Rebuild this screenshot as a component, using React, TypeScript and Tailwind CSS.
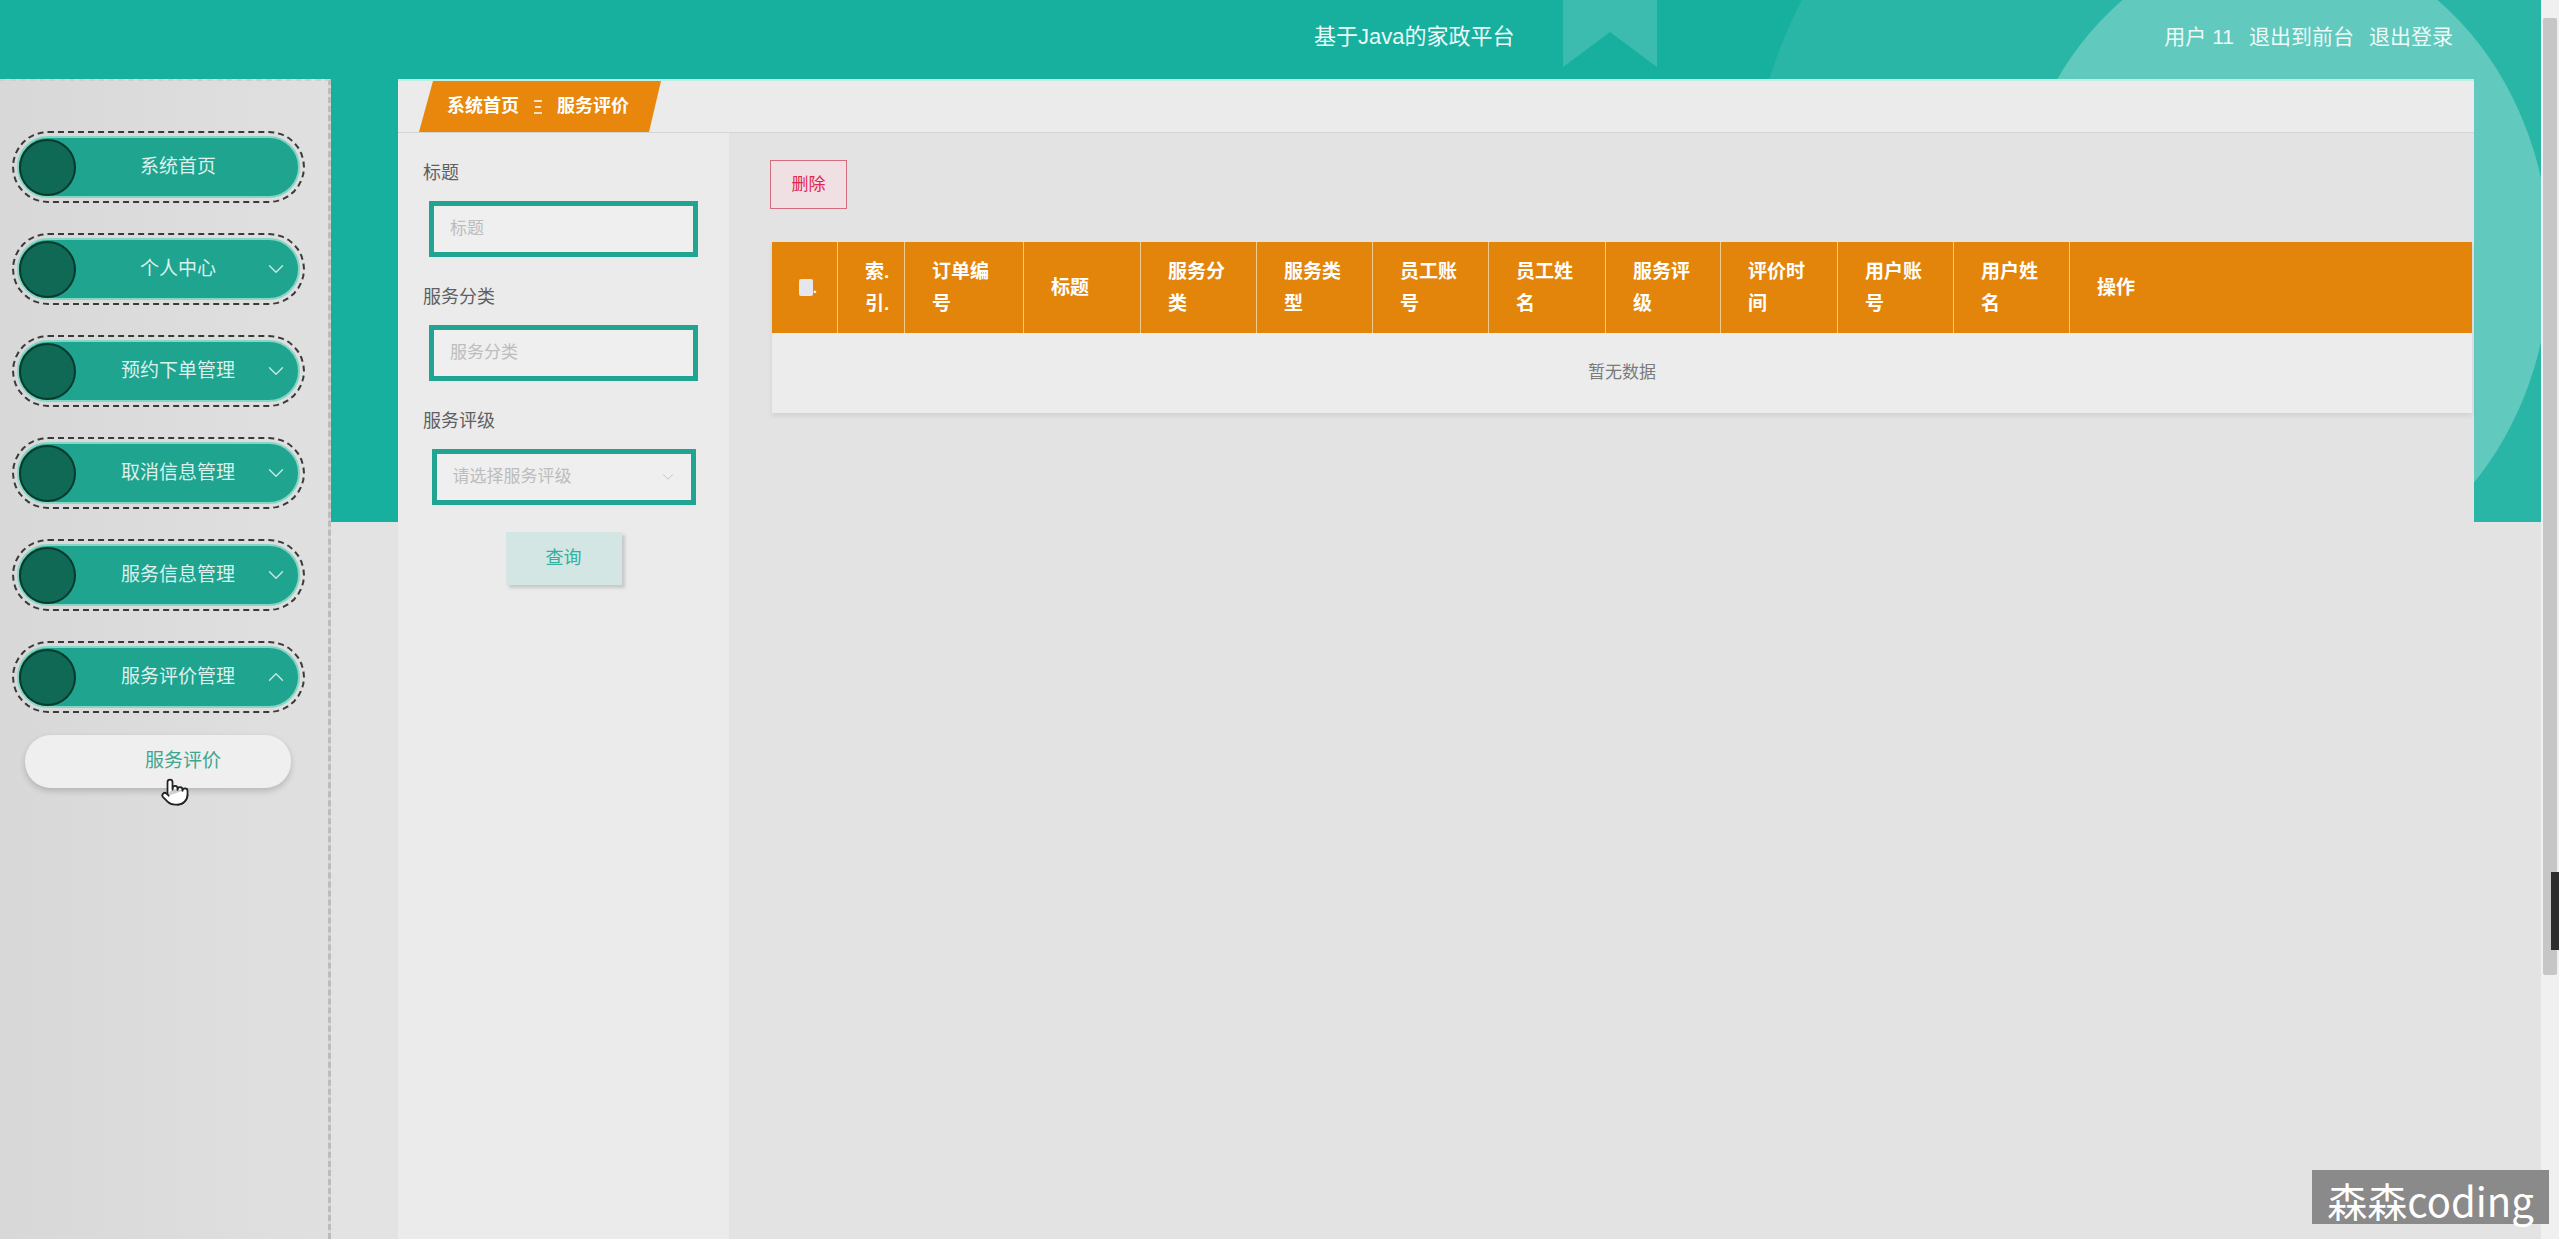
import { ChevronDown, ChevronUp, Pointer } from "lucide-react";

const menus = [
  { label: "系统首页", arrow: "" },
  { label: "个人中心", arrow: "down" },
  { label: "预约下单管理", arrow: "down" },
  { label: "取消信息管理", arrow: "down" },
  { label: "服务信息管理", arrow: "down" },
  { label: "服务评价管理", arrow: "up" },
];

const columns = [
  { w: "w-[67px]", a: "索.", b: "引." },
  { w: "w-[119px]", a: "订单编", b: "号" },
  { w: "w-[117px]", a: "标题", b: "" },
  { w: "w-[116px]", a: "服务分", b: "类" },
  { w: "w-[116px]", a: "服务类", b: "型" },
  { w: "w-[116px]", a: "员工账", b: "号" },
  { w: "w-[117px]", a: "员工姓", b: "名" },
  { w: "w-[115px]", a: "服务评", b: "级" },
  { w: "w-[117px]", a: "评价时", b: "间" },
  { w: "w-[116px]", a: "用户账", b: "号" },
  { w: "w-[116px]", a: "用户姓", b: "名" },
];

function MenuPill({ label, arrow }: { label: string; arrow: string }) {
  return (
    <div className="ml-[17px] flex h-[62px] w-[283px] items-center rounded-full border-2 border-[#86d6c6] bg-[#1fa48f] outline-2 outline-dashed outline-offset-[3px] outline-[#3a3a3a]">
      <div className="h-[57px] w-[57px] shrink-0 rounded-full border-2 border-[#083a2e] bg-[#0f6954]" />
      <span className="flex-1 pl-[26px] text-center text-[19px] text-[#dcf1ec]">{label}</span>
      <div className="flex w-[44px] justify-center text-[#c4ebe2]">
        {arrow === "down" && <ChevronDown size={26} strokeWidth={1.3} />}
        {arrow === "up" && <ChevronUp size={26} strokeWidth={1.3} />}
      </div>
    </div>
  );
}

function Field({ label, placeholder }: { label: string; placeholder: string }) {
  return (
    <>
      <div className="mt-[28px] h-[24px] pl-[25px] text-[18px] leading-[24px] text-[#5f5f5f]">{label}</div>
      <div className="mx-auto mt-[16px] flex h-[56px] w-[269px] items-center border-[5px] border-[#1fa591] bg-[#efefef] pl-[16px] text-[17px] text-[#bdbdbd]">
        {placeholder}
      </div>
    </>
  );
}

export default function App() {
  return (
    <div className="relative flex h-[1239px] w-full overflow-hidden bg-[#e3e3e3] font-['Liberation_Sans','Noto_Sans_CJK_SC',sans-serif]">
      {/* header decorations */}
      <svg className="pointer-events-none absolute left-0 top-0" width="2541" height="523">
        <ellipse cx="2280" cy="260" rx="540" ry="560" fill="#ffffff" fillOpacity="0.08" />
        <ellipse cx="2280" cy="260" rx="270" ry="320" fill="#ffffff" fillOpacity="0.27" />
        <polygon points="1563,0 1657,0 1657,67 1610,32 1563,67" fill="#ffffff" fillOpacity="0.16" />
      </svg>

      <div className="flex flex-1 flex-col">
        {/* Header */}
        <div className="h-[79px] shrink-0 bg-[#17b09f]">
          <div className="relative flex h-full items-center pb-[6px] pl-[1314px] pr-[88px] text-[#ecfaf7]">
            <span className="text-[22px]">基于Java的家政平台</span>
            <div className="ml-auto flex gap-[15px] text-[21px]">
              <span>用户 11</span>
              <span>退出到前台</span>
              <span>退出登录</span>
            </div>
          </div>
        </div>

        <div className="flex flex-1">
          {/* Sidebar */}
          <div className="relative flex w-[331px] shrink-0 flex-col gap-[40px] border-r-[3px] border-t-2 border-dashed border-r-[#bcbcbc] border-t-[#cfcfcf] bg-[linear-gradient(to_right,#d8d8d8,#e0e0e0)] pt-[55px]">
            {menus.map((m) => (
              <MenuPill key={m.label} label={m.label} arrow={m.arrow} />
            ))}
            <div className="-mt-[13px] ml-[25px] flex h-[53px] w-[266px] items-center justify-center rounded-[26px] bg-[#efefef] pl-[50px] text-[19px] text-[#3ea690] shadow-[0_3px_6px_rgba(0,0,0,0.18)]">
              服务评价
            </div>
            <Pointer className="absolute left-[160px] top-[696px]" size={30} fill="#ffffff" strokeWidth={1.4} color="#222" />
          </div>

          {/* Right region */}
          <div className="flex flex-1 bg-[linear-gradient(to_bottom,#17b09f_443px,#e3e3e3_443px)] px-[67px]">
            <div className="relative flex flex-1 flex-col">
              {/* Breadcrumb */}
              <div className="flex h-[54px] shrink-0 border-b border-t-2 border-b-[#d4d4d4] border-t-[#bfeee5] bg-[#ebebeb]">
                <div className="ml-[21px] flex w-[242px] items-center gap-[14px] bg-[#e8870b] pl-[28px] text-[18px] font-bold text-white [clip-path:polygon(14px_0,100%_0,calc(100%-12px)_100%,0_100%)]">
                  <span>系统首页</span>
                  <svg width="10" height="18" viewBox="0 0 10 18">
                    <path d="M1 3h8M2 9h6M1 15h8" stroke="#fff" strokeWidth="1.4" />
                  </svg>
                  <span>服务评价</span>
                </div>
              </div>

              <div className="flex flex-1">
                {/* Search form */}
                <div className="flex w-[331px] shrink-0 flex-col bg-[#ebebeb]">
                  <Field label="标题" placeholder="标题" />
                  <Field label="服务分类" placeholder="服务分类" />
                  <div className="mt-[28px] h-[24px] pl-[25px] text-[18px] leading-[24px] text-[#5f5f5f]">服务评级</div>
                  <div className="mx-auto mt-[16px] flex h-[56px] w-[264px] items-center border-[5px] border-[#1fa591] bg-[#efefef] pl-[16px] pr-[14px] text-[17px] text-[#bdbdbd]">
                    <span className="flex-1">请选择服务评级</span>
                    <ChevronDown size={18} strokeWidth={1.3} color="#c4c4c4" />
                  </div>
                  <div className="mx-auto mt-[27px] flex h-[53px] w-[116px] items-center justify-center bg-[#d3e6e3] text-[18px] text-[#2fb19d] shadow-[3px_3px_3px_rgba(0,0,0,0.15)]">
                    查询
                  </div>
                </div>

                {/* Main */}
                <div className="flex flex-1 flex-col bg-[#e3e3e3] pl-[43px] pr-[2px] pt-[27px]">
                  <div className="-ml-[2px] flex h-[49px] w-[77px] items-center justify-center border-[1.5px] border-[#d66d7e] bg-[#f0dfe3] text-[17px] text-[#e0284f]">
                    删除
                  </div>
                  <div className="mt-[33px] shadow-[0_3px_5px_rgba(0,0,0,0.08)]">
                    <div className="flex h-[91px] bg-[#e4850b] text-[19px] font-bold leading-[32px] text-white">
                      <div className="flex w-[66px] items-center border-r border-[#f4c98f] pl-[27px]">
                        <div className="h-[17px] w-[14px] rounded-[2px] bg-[#e6e6ef]" />
                        <span className="text-[14px]">.</span>
                      </div>
                      {columns.map((c) => (
                        <div key={c.a} className={`${c.w} flex flex-col justify-center border-r border-[#f4c98f] pl-[27px]`}>
                          <span>{c.a}</span>
                          {c.b && <span>{c.b}</span>}
                        </div>
                      ))}
                      <div className="flex flex-1 items-center pl-[27px]">操作</div>
                    </div>
                    <div className="flex h-[80px] items-center justify-center bg-[#ececec] text-[17px] text-[#7a7a7a]">
                      暂无数据
                    </div>
                  </div>
                </div>
              </div>
            </div>
          </div>
        </div>
      </div>

      {/* Scrollbar */}
      <div className="relative flex w-[18px] shrink-0 flex-col bg-[#f0f0f0] pt-[18px]">
        <div className="mx-[2px] h-[957px] rounded-[2px] bg-[#c6c6c6]" />
        <div className="absolute right-0 top-[872px] h-[78px] w-[8px] bg-[#2e2e2e]" />
      </div>

      {/* Watermark */}
      <div className="absolute bottom-[15px] right-[10px] flex h-[54px] w-[237px] items-end justify-center bg-[#8a8a8a] text-[40px] leading-[48px] text-white font-['Noto_Sans_CJK_SC',sans-serif]">
        森森coding
      </div>
    </div>
  );
}
